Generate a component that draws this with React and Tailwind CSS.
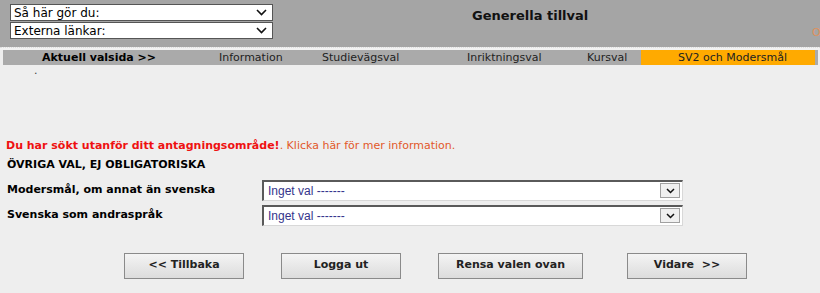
const FONT = { fontFamily: '"DejaVu Sans", Verdana, sans-serif' };

function Chevron({ className = '' }) {
  return (
    <svg className={className} width="11" height="7" viewBox="0 0 11 7" fill="none">
      <path d="M1 1l4.5 4.5L10 1" stroke="#111" strokeWidth="1.6" />
    </svg>
  );
}

function HeaderSelect({ label }) {
  return (
    <div className="flex h-[17px] w-[263px] items-center justify-between border border-[#555] bg-white pl-[3px] pr-[5px] text-[12px] leading-none text-black">
      <span>{label}</span>
      <Chevron />
    </div>
  );
}

function ChoiceSelect() {
  return (
    <div
      className="flex h-[21px] w-[421px] items-center justify-between border-t-2 border-l-2 border-[#5a5a5a] border-r border-b border-r-[#d8d8d8] border-b-[#d8d8d8] bg-white pl-[4px] pr-[2px]"
      style={{ fontFamily: '"Liberation Sans", Arial, sans-serif' }}
    >
      <span className="text-[12px] text-[#34348c]">Inget val -------</span>
      <span className="flex h-[15px] w-[20px] items-center justify-center border border-[#a0a0a0] bg-[#f0f0f0]">
        <svg width="9" height="6" viewBox="0 0 9 6" fill="none">
          <path d="M1 1l3.5 3.5L8 1" stroke="#111" strokeWidth="1.5" />
        </svg>
      </span>
    </div>
  );
}

function NavButton({ children, className = '' }) {
  return (
    <button
      className={`h-[26px] border border-[#8a8a8a] bg-gradient-to-b from-[#f4f4f4] to-[#dcdcdc] text-[11px] font-bold text-[#222] ${className}`}
    >
      {children}
    </button>
  );
}

const TABS = [
  { label: 'Aktuell valsida >>', w: 'w-[187px]', pl: 'pl-[39px]', extra: 'font-bold text-black' },
  { label: 'Information', w: 'w-[110px]', pl: 'pl-[29px]' },
  { label: 'Studievägsval', w: 'w-[130px]', pl: 'pl-[22px]' },
  { label: 'Inriktningsval', w: 'w-[130px]', pl: 'pl-[37px]' },
  { label: 'Kursval', w: 'w-[81px]', pl: 'pl-[27px]' },
  { label: 'SV2 och Modersmål', w: 'w-[174px]', pl: 'pl-[37px]', extra: 'bg-[#ffaa00]' },
];

export default function App() {
  return (
    <div className="h-[293px] w-[820px] overflow-hidden bg-[#eeeeee] text-[11px]" style={FONT}>
      <header className="flex h-[47px] bg-[#a5a5a5]">
        <div className="flex flex-col gap-[1px] pl-[10px] pt-[4px]">
          <HeaderSelect label="Så här gör du:" />
          <HeaderSelect label="Externa länkar:" />
        </div>
        <div className="flex-1 pl-[199px] pt-[6px]">
          <h1 className="text-[13px] font-bold text-[#111]">Generella tillval</h1>
        </div>
        <div className="w-[8px] overflow-hidden pt-[25px]">
          <span className="text-[11px] text-[#e0905a]">O</span>
        </div>
      </header>

      <div className="h-[3px] border-t border-dotted border-[#ddd] bg-[#f2f2f2]" />

      <nav className="ml-[3px] flex h-[15px] w-[815px] bg-[#aaaaaa] leading-[15px] text-[#222]">
        {TABS.map((tab) => (
          <div key={tab.label} className={`${tab.w} ${tab.pl} shrink-0 whitespace-nowrap ${tab.extra || ''}`}>
            {tab.label}
          </div>
        ))}
      </nav>

      <div className="pl-[34px] leading-[12px] text-[#444]">.</div>

      <main className="pl-[6px] pt-[62px]">
        <p className="leading-[14px]">
          <span className="font-bold text-[#ee1111]">Du har sökt utanför ditt antagningsområde!</span>
          <span className="text-[#e2582a]">. Klicka här för mer information.</span>
        </p>
        <p className="mt-[4px] pl-[1px] font-bold text-black">ÖVRIGA VAL, EJ OBLIGATORISKA</p>

        <div className="mt-[6px] flex flex-col gap-[4px]">
          <div className="flex items-center">
            <span className="w-[256px] pl-[1px] font-bold text-black">Modersmål, om annat än svenska</span>
            <ChoiceSelect />
          </div>
          <div className="flex items-center">
            <span className="w-[256px] pl-[1px] font-bold text-black">Svenska som andraspråk</span>
            <ChoiceSelect />
          </div>
        </div>

        <div className="mt-[27px] flex pl-[118px]">
          <NavButton className="w-[120px]">&lt;&lt; Tillbaka</NavButton>
          <NavButton className="ml-[37px] w-[120px]">Logga ut</NavButton>
          <NavButton className="ml-[37px] w-[145px]">Rensa valen ovan</NavButton>
          <NavButton className="ml-[44px] w-[120px]">Vidare &nbsp;&gt;&gt;</NavButton>
        </div>
      </main>
    </div>
  );
}
